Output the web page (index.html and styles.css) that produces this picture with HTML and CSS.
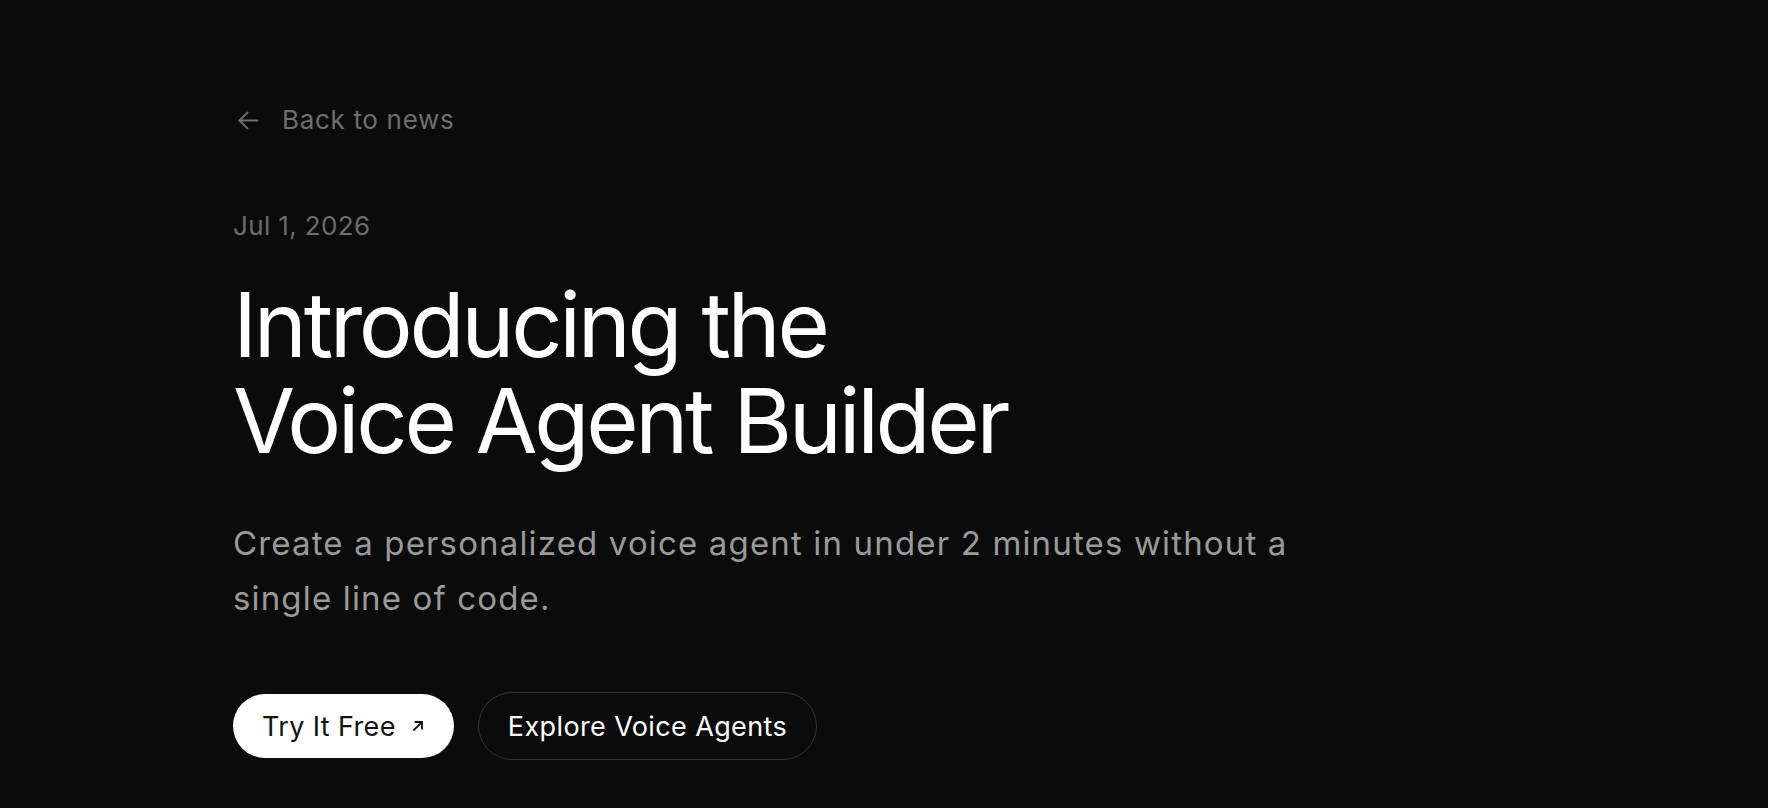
FILE: index.html
```html
<!DOCTYPE html>
<html lang="en">
<head>
  <meta charset="UTF-8" />
  <title>Introducing the Voice Agent Builder</title>
  <link rel="stylesheet" href="styles.css">
</head>
<body>
  <main class="article">
    <a class="back-link" href="#">
      <svg class="back-icon" viewBox="0 0 24 24" width="24" height="24" fill="none" stroke="currentColor" stroke-width="1.8" stroke-linecap="round" stroke-linejoin="round">
        <path d="M20 12H4"/>
        <path d="M11 5l-7 7 7 7"/>
      </svg>
      <span>Back to news</span>
    </a>

    <p class="date">Jul 1, 2026</p>

    <h1>Introducing the<br>Voice Agent Builder</h1>

    <p class="lead">Create a personalized voice agent in under 2 minutes without a<br>single line of code.</p>

    <div class="actions">
      <a class="btn btn-primary" href="#">
        Try It Free
        <svg class="btn-icon" viewBox="0 0 16 16" width="16" height="16" fill="none" stroke="currentColor" stroke-width="1.8" stroke-linecap="square">
          <path d="M4 12L12 4"/>
          <path d="M5.5 4H12v6.5"/>
        </svg>
      </a>
      <a class="btn btn-outline" href="#">Explore Voice Agents</a>
    </div>
  </main>
</body>
</html>
```

FILE: styles.css
```css
* {
  margin: 0;
  padding: 0;
  box-sizing: border-box;
}
html, body {
  background: #0b0b0b;
}
body {
  font-family: Inter, "Noto Sans", sans-serif;
  color: #fff;
  min-height: 100vh;
}
a {
  text-decoration: none;
  color: inherit;
}
.article {
  padding: 102px 0 0 233px;
  display: flex;
  flex-direction: column;
  align-items: flex-start;
}
.back-link {
  display: flex;
  align-items: center;
  gap: 20px;
  color: #6e6e6e;
  font-size: 26px;
  line-height: 36px;
  letter-spacing: 0.026em;
}
.back-icon {
  width: 27px;
  height: 27px;
  margin-left: 2px;
}
.date {
  margin-top: 70px;
  color: #6c6c6c;
  font-size: 26px;
  line-height: 36px;
  letter-spacing: 0.014em;
}
h1 {
  margin-top: 33px;
  font-size: 90px;
  font-weight: 400;
  line-height: 96px;
  letter-spacing: -0.037em;
}
.lead {
  margin-top: 47px;
  color: #9a9a9a;
  font-size: 33px;
  line-height: 55px;
  letter-spacing: 0.035em;
}
.actions {
  margin-top: 66px;
  display: flex;
  gap: 24px;
  align-items: center;
}
.btn {
  display: inline-flex;
  align-items: center;
  gap: 14px;
  height: 64px;
  padding: 0 29px;
  border-radius: 32px;
  font-size: 27px;
  letter-spacing: 0.014em;
}
.btn-primary {
  background: #fff;
  color: #111;
  padding-right: 28px;
}
.btn-icon {
  width: 16px;
  height: 16px;
}
.btn-outline {
  height: 68px;
  border: 1.5px solid #333;
  border-radius: 34px;
  color: #fff;
}
```
